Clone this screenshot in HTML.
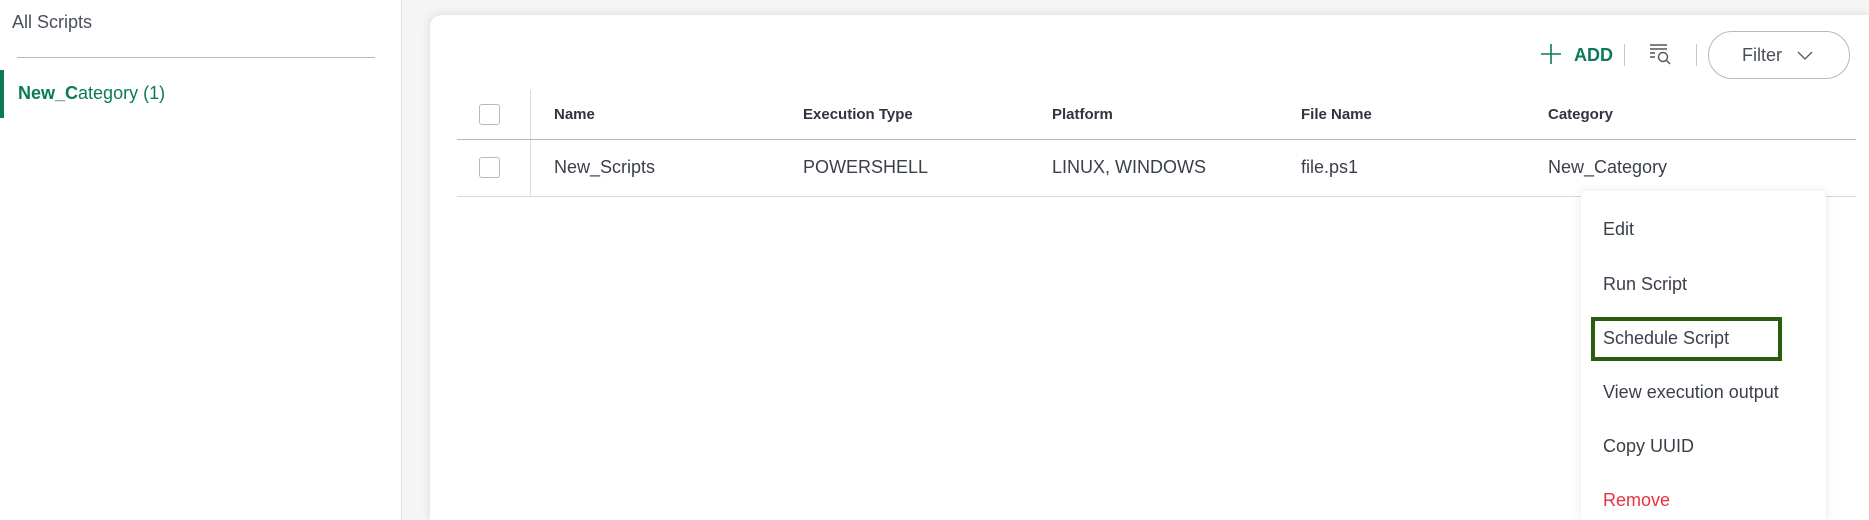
<!DOCTYPE html>
<html><head><style>
*{margin:0;padding:0;box-sizing:border-box}
html,body{width:1869px;height:520px;overflow:hidden}
body{background:#f5f5f5;font-family:"Liberation Sans",sans-serif;color:#3a3f4a;position:relative}
.side{position:absolute;left:0;top:0;width:402px;height:520px;background:#fff;border-right:1px solid #e4e4e4}
.abs{position:absolute;white-space:nowrap}
.card{position:absolute;left:430px;top:15px;width:1439px;height:505px;background:#fff;border-radius:12px 0 0 0;box-shadow:0 0 10px rgba(0,0,0,.12)}
.th{font-weight:bold;font-size:15px;color:#2f3440;top:106px}
.td{font-size:18px;top:157px}
.cb{position:absolute;width:21px;height:21px;border:1px solid #b5b9be;border-radius:3px;left:479px}
.menu{position:absolute;left:1581px;top:191px;width:245px;height:329px;background:#fff;border-radius:6px 6px 0 0;box-shadow:0 0 10px rgba(0,0,0,.1)}
.mi{position:absolute;left:22px;font-size:18px;color:#3a3f4a}
</style></head><body>
<div class="side">
<div class="abs" style="left:12px;top:12px;font-size:18px;color:#4a4f5a">All Scripts</div>
<div class="abs" style="left:17px;top:57px;width:358px;height:1px;background:#b5b9be"></div>
<div class="abs" style="left:0;top:70px;width:4px;height:48px;background:#0b7a5a"></div>
<div class="abs" style="left:18px;top:83px;font-size:18px;color:#0b7a5a"><b>New_C</b>ategory (1)</div>
</div>
<div class="card"></div>
<svg class="abs" style="left:1541px;top:44px" width="20" height="20"><path d="M10 0V20M0 10H20" stroke="#0b7a5a" stroke-width="1.6"/></svg>
<div class="abs" style="left:1574px;top:45px;font-size:18px;font-weight:bold;color:#0b7a5a">ADD</div>
<div class="abs" style="left:1624px;top:44px;width:1px;height:22px;background:#c8c8c8"></div>
<svg class="abs" style="left:1649px;top:43px" width="24" height="22"><path d="M1 2H18M1 6H18M1 10H6M1 14H6" stroke="#555" stroke-width="1.4"/><circle cx="14" cy="14" r="4.5" fill="none" stroke="#555" stroke-width="1.4"/><path d="M17 17L21 21" stroke="#555" stroke-width="1.4"/></svg>
<div class="abs" style="left:1696px;top:44px;width:1px;height:22px;background:#c8c8c8"></div>
<div class="abs" style="left:1708px;top:31px;width:142px;height:48px;border:1px solid #b5b9be;border-radius:24px"></div>
<div class="abs" style="left:1742px;top:45px;font-size:18px;color:#4a4f5a">Filter</div>
<svg class="abs" style="left:1797px;top:51px" width="16" height="10"><path d="M1 1L8 8L15 1" fill="none" stroke="#555" stroke-width="1.3"/></svg>
<div class="abs" style="left:530px;top:90px;width:1px;height:106px;background:#dcdcdc"></div>
<div class="cb" style="top:104px"></div>
<div class="cb" style="top:157px"></div>
<div class="abs th" style="left:554px">Name</div>
<div class="abs th" style="left:803px">Execution Type</div>
<div class="abs th" style="left:1052px">Platform</div>
<div class="abs th" style="left:1301px">File Name</div>
<div class="abs th" style="left:1548px">Category</div>
<div class="abs" style="left:457px;top:139px;width:1399px;height:1px;background:#b5b9be"></div>
<div class="abs td" style="left:554px">New_Scripts</div>
<div class="abs td" style="left:803px">POWERSHELL</div>
<div class="abs td" style="left:1052px">LINUX, WINDOWS</div>
<div class="abs td" style="left:1301px">file.ps1</div>
<div class="abs td" style="left:1548px">New_Category</div>
<div class="abs" style="left:457px;top:196px;width:1399px;height:1px;background:#d8d8d8"></div>
<div class="menu">
<div class="mi" style="top:28px">Edit</div>
<div class="mi" style="top:83px">Run Script</div>
<div class="mi" style="top:137px">Schedule Script</div>
<div class="mi" style="top:191px">View execution output</div>
<div class="mi" style="top:245px">Copy UUID</div>
<div class="mi" style="top:299px;color:#e8323c">Remove</div>
<div class="abs" style="left:10px;top:126px;width:191px;height:44px;border:4px solid #2a5e0a"></div>
</div>
</body></html>
